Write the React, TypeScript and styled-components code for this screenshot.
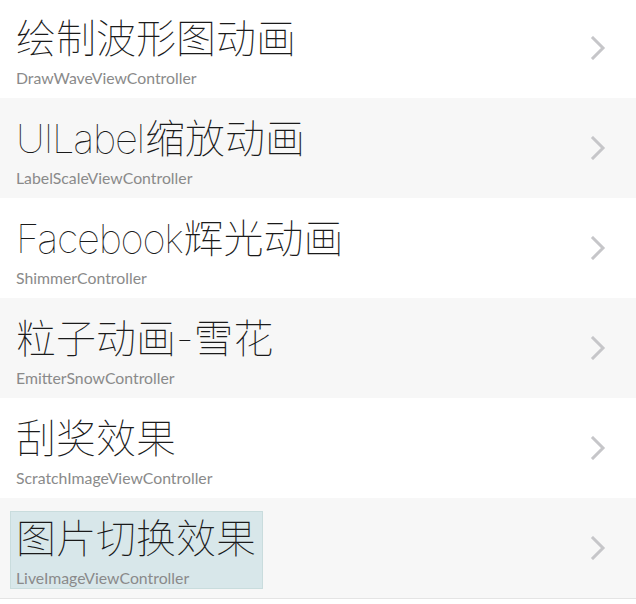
import React from "react";
import styled, { createGlobalStyle } from "styled-components";

const Global = createGlobalStyle`
  html, body { margin: 0; padding: 0; background: #ffffff; }
  body { font-family: "Lato", "Noto Sans CJK SC", sans-serif; overflow: hidden; }
`;

const List = styled.div`
  display: flex;
  flex-direction: column;
  margin-top: -2px;
  border-bottom: 1px solid #e4e4e4;
`;

const Row = styled.div<{ $alt: boolean }>`
  height: 100px;
  box-sizing: border-box;
  display: flex;
  align-items: center;
  justify-content: space-between;
  padding: 0 30px 0 10px;
  background: ${(p) => (p.$alt ? "#f7f7f7" : "#ffffff")};
`;

const TextBlock = styled.div<{ $hl: boolean }>`
  display: flex;
  flex-direction: column;
  padding: 2px 6px 0 5px;
  height: 78px;
  box-sizing: border-box;
  margin-top: 4px;
  border: 1px solid ${(p) => (p.$hl ? "#c9dcdd" : "transparent")};
  background: ${(p) => (p.$hl ? "#d8e7ea" : "transparent")};
`;

const Title = styled.div`
  font-family: "Inter", "Noto Sans CJK SC", sans-serif;
  font-weight: 100;
  font-size: 40px;
  line-height: 50px;
  color: #1a1a1a;
  white-space: nowrap;
`;

const Latin = styled.span`
  letter-spacing: -1.3px;
  margin-right: 1px;
`;

const Subtitle = styled.div`
  font-family: "Lato", "Noto Sans CJK SC", sans-serif;
  font-weight: 400;
  font-size: 15.8px;
  line-height: 20px;
  margin-top: 4px;
  color: #8a8a8a;
  white-space: nowrap;
`;

const Chevron = () => (
  <svg width="16" height="24" viewBox="0 0 16 24">
    <polyline
      points="3,2 13,12 3,22"
      fill="none"
      stroke="#c6c6c9"
      strokeWidth="3"
      strokeLinecap="square"
    />
  </svg>
);

const items = [
  { latin: "", title: "绘制波形图动画", sub: "DrawWaveViewController" },
  { latin: "UILabel", title: "缩放动画", sub: "LabelScaleViewController" },
  { latin: "Facebook", title: "辉光动画", sub: "ShimmerController" },
  { latin: "", title: "粒子动画-雪花", sub: "EmitterSnowController" },
  { latin: "", title: "刮奖效果", sub: "ScratchImageViewController" },
  { latin: "", title: "图片切换效果", sub: "LiveImageViewController" },
];

export default function App() {
  return (
    <>
      <Global />
      <List>
        {items.map((it, i) => (
          <Row key={it.sub} $alt={i % 2 === 1}>
            <TextBlock $hl={i === items.length - 1}>
              <Title>
                {it.latin && <Latin>{it.latin}</Latin>}
                {it.title}
              </Title>
              <Subtitle>{it.sub}</Subtitle>
            </TextBlock>
            <Chevron />
          </Row>
        ))}
      </List>
    </>
  );
}
